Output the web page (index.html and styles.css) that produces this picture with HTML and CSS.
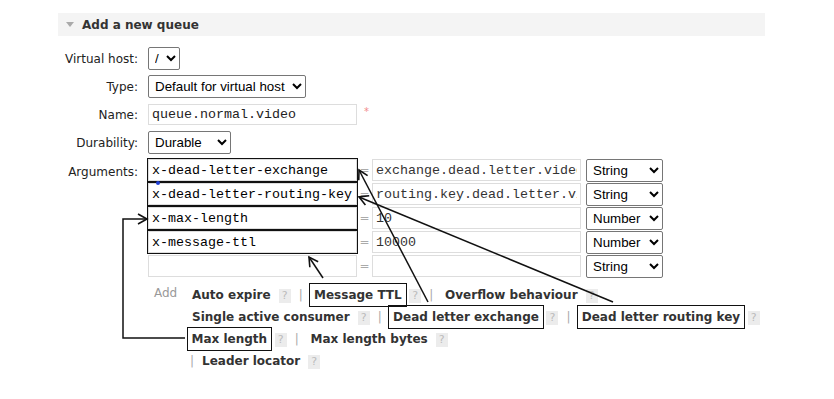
FILE: index.html
```html
<!DOCTYPE html>
<html lang="en">
<head>
    <meta charset="UTF-8">
    <meta name="viewport" content="width=device-width, initial-scale=1.0">
    <title>Add a new queue</title>
    <link rel="stylesheet" href="styles.css">
</head>
<body>
    <div class="page">
        <div class="section">
            <h2 class="section-head"><span class="toggle"></span>Add a new queue</h2>
            <div class="form">
                <label class="field-label">Virtual host:</label>
                <div class="field">
                    <select class="sel sel-vhost"><option>/</option></select>
                </div>

                <label class="field-label">Type:</label>
                <div class="field">
                    <select class="sel sel-type"><option>Default for virtual host</option></select>
                </div>

                <label class="field-label">Name:</label>
                <div class="field">
                    <input class="txt txt-name" type="text" value="queue.normal.video">
                    <span class="mand">*</span>
                </div>

                <label class="field-label">Durability:</label>
                <div class="field">
                    <select class="sel sel-dur"><option>Durable</option></select>
                </div>

                <label class="field-label args-label">Arguments:</label>
                <div class="args">
                    <div class="arg-row">
                        <input class="txt key marked" type="text" value="x-dead-letter-exchange">
                        <span class="eq">=</span>
                        <input class="txt val" type="text" value="exchange.dead.letter.video">
                        <select class="sel sel-kind"><option>String</option></select>
                    </div>
                    <div class="arg-row">
                        <input class="txt key marked" type="text" value="x-dead-letter-routing-key">
                        <span class="eq">=</span>
                        <input class="txt val" type="text" value="routing.key.dead.letter.video">
                        <select class="sel sel-kind"><option>String</option></select>
                    </div>
                    <div class="arg-row">
                        <input class="txt key marked" type="text" value="x-max-length">
                        <span class="eq">=</span>
                        <input class="txt val" type="text" value="10">
                        <select class="sel sel-kind"><option>Number</option></select>
                    </div>
                    <div class="arg-row">
                        <input class="txt key marked" type="text" value="x-message-ttl">
                        <span class="eq">=</span>
                        <input class="txt val" type="text" value="10000">
                        <select class="sel sel-kind"><option>Number</option></select>
                    </div>
                    <div class="arg-row">
                        <input class="txt key" type="text" value="">
                        <span class="eq">=</span>
                        <input class="txt val" type="text" value="">
                        <select class="sel sel-kind"><option>String</option></select>
                    </div>

                    <div class="arg-add">
                        <span class="add">Add</span>
                        <div class="arg-links">
                            <div class="link-line">
                                <span class="arg-link">Auto expire</span><span class="help">?</span><span class="sep">|</span>
                                <span class="arg-link boxed">Message TTL</span><span class="help">?</span><span class="sep">|</span>
                                <span class="arg-link">Overflow behaviour</span><span class="help">?</span>
                            </div>
                            <div class="link-line">
                                <span class="arg-link">Single active consumer</span><span class="help">?</span><span class="sep">|</span>
                                <span class="arg-link boxed">Dead letter exchange</span><span class="help">?</span><span class="sep">|</span>
                                <span class="arg-link boxed">Dead letter routing key</span><span class="help">?</span>
                            </div>
                            <div class="link-line">
                                <span class="arg-link boxed">Max length</span><span class="help">?</span><span class="sep">|</span>
                                <span class="arg-link">Max length bytes</span><span class="help">?</span>
                            </div>
                            <div class="link-line">
                                <span class="sep lead">|</span><span class="arg-link">Leader locator</span><span class="help">?</span>
                            </div>
                        </div>
                    </div>
                </div>
            </div>
        </div>

        <!-- hand-drawn annotation arrows on top of the form -->
        <svg class="notes" width="834" height="399" viewBox="0 0 834 399">
            <defs>
                <marker id="tip" markerWidth="12" markerHeight="12" refX="10" refY="6" orient="auto" markerUnits="userSpaceOnUse">
                    <path d="M1,1 L10,6 L1,11" fill="none" stroke="#111" stroke-width="1.6"/>
                </marker>
            </defs>
            <line x1="323" y1="278" x2="309" y2="257" stroke="#111" stroke-width="1.5" marker-end="url(#tip)"/>
            <line x1="428" y1="302" x2="359" y2="170" stroke="#111" stroke-width="1.5" marker-end="url(#tip)"/>
            <line x1="613" y1="302" x2="359" y2="197" stroke="#111" stroke-width="1.5" marker-end="url(#tip)"/>
            <polyline points="185,338 123,338 123,219 147,219" fill="none" stroke="#111" stroke-width="1.5" marker-end="url(#tip)"/>
            <circle cx="158" cy="183" r="2" fill="#1f3fd6"/>
        </svg>
    </div>
</body>
</html>
```

FILE: styles.css
```css
* {
    box-sizing: border-box;
}

body {
    margin: 0;
    background: #fff;
    font-family: "DejaVu Sans", Verdana, sans-serif;
    font-size: 12px;
    color: #222;
}

.page {
    position: relative;
    width: 834px;
    height: 399px;
    overflow: hidden;
    padding: 13px 0 0 58px;
}

.section {
    width: 707px;
}

.section-head {
    margin: 0;
    height: 23px;
    background: #f4f4f4;
    display: flex;
    align-items: center;
    padding-left: 8px;
    font-size: 12px;
    font-weight: bold;
    color: #333;
}

.toggle {
    width: 0;
    height: 0;
    border-left: 4.5px solid transparent;
    border-right: 4.5px solid transparent;
    border-top: 5px solid #aaa;
    margin-right: 8px;
}

.form {
    display: grid;
    grid-template-columns: 80px auto;
    grid-auto-rows: minmax(23px, auto);
    column-gap: 10px;
    row-gap: 5px;
    margin-top: 11px;
}

.field-label {
    text-align: right;
    align-self: center;
    white-space: nowrap;
    color: #222;
}

.args-label {
    align-self: start;
    padding-top: 6px;
}

.field {
    display: flex;
    align-items: center;
}

.sel {
    height: 23px;
    font-family: "Liberation Sans", Arial, sans-serif;
    font-size: 13.33px;
    color: #000;
    background: #fff;
    border: 1px solid #767676;
    border-radius: 2px;
    padding: 0 2px;
}

.sel-vhost { width: 32px; }
.sel-type { width: 158px; }
.sel-dur { width: 83px; }
.sel-kind { width: 77px; height: 23px; }

.txt {
    height: 21px;
    font-family: "Liberation Mono", "Courier New", monospace;
    font-size: 13.33px;
    color: #222;
    border: 1px solid #ddd;
    padding: 1px 3px;
    background: #fff;
    outline: none;
}

.txt-name {
    width: 209px;
}

.mand {
    color: #f28b8b;
    font-size: 10px;
    margin-left: 7px;
    align-self: flex-start;
    margin-top: 3px;
}

.args {
    display: flex;
    flex-direction: column;
    gap: 2px;
}

.arg-row {
    display: flex;
    align-items: center;
    height: 22px;
}

.key {
    width: 209px;
    height: 22px;
}

.key.marked {
    outline: 1.5px solid #111;
    color: #000;
}

.eq {
    width: 15px;
    text-align: center;
    color: #aaa;
}

.val {
    width: 209px;
    height: 22px;
    color: #333;
    margin-right: 5px;
}

.arg-add {
    display: flex;
    margin-top: 5px;
}

.add {
    width: 44px;
    padding-left: 6px;
    line-height: 19px;
    color: #999;
}

.link-line {
    height: 22px;
    line-height: 22px;
    white-space: nowrap;
}

.arg-link {
    font-weight: bold;
    color: #333;
}

.arg-link.boxed {
    border: 1.5px solid #111;
    padding: 4px 4px;
    margin: 0 -5.5px;
}

.help {
    display: inline-block;
    width: 12px;
    height: 14px;
    line-height: 14px;
    margin-left: 8px;
    background: #ececec;
    color: #bbb;
    font-size: 11px;
    text-align: center;
    vertical-align: middle;
}

.sep {
    margin: 0 8px;
    color: #aaa;
}

.sep.lead {
    margin: 0 8px 0 -2px;
}

.notes {
    position: absolute;
    top: 0;
    left: 0;
    pointer-events: none;
}
```
